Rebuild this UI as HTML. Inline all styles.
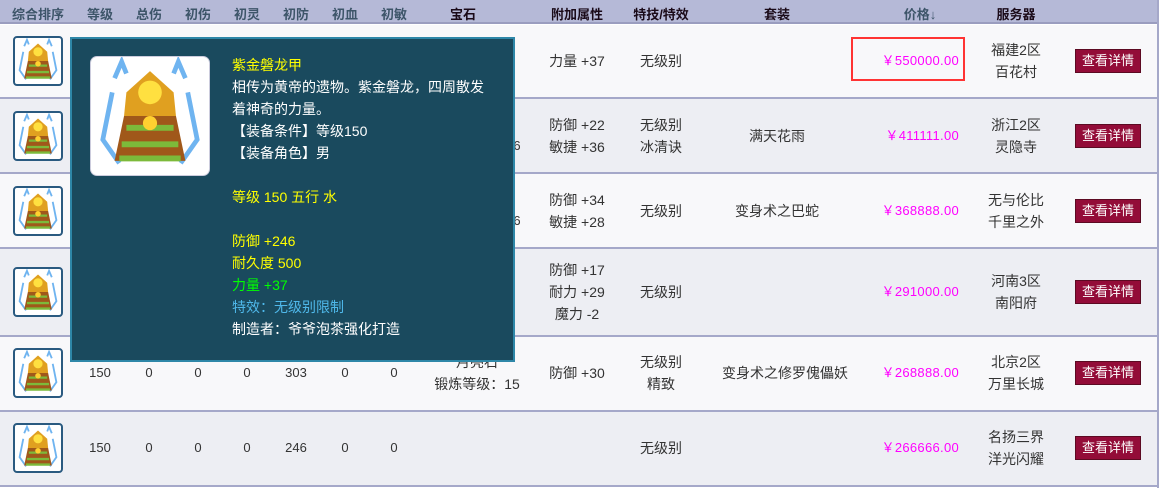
<!DOCTYPE html>
<html><head><meta charset="utf-8"><style>
*{margin:0;padding:0;box-sizing:border-box}
body{width:1159px;height:488px;overflow:hidden;background:#fff;font-family:"Liberation Sans","Noto Sans CJK SC","WenQuanYi Zen Hei",sans-serif;font-size:14px;color:#333;position:relative}
.hdr{position:absolute;left:0;top:0;width:1157px;height:24px;background:#b5b9d7;border-bottom:2px solid #9a9dbf}
.h{position:absolute;top:4px;width:100px;text-align:center;font-weight:bold;font-size:13px;color:#3d5569}
.h.k{color:#1a0a18}
.row{position:absolute;left:0;width:1157px;border-bottom:2px solid #a5a8c9}
.c{position:absolute;width:140px;text-align:center;line-height:22px;transform:translateY(-50%)}
.n{font-size:13px}
.p{position:absolute;right:200px;color:#f0f;line-height:22px;transform:translateY(-50%);letter-spacing:.3px;font-size:13px}
.btn{position:absolute;left:1075px;width:66px;height:24px;background:#930c38;border:1px solid #5c0a22;color:#fff;text-align:center;line-height:22px;font-size:13px;transform:translateY(-50%)}
.ic{position:absolute;left:13px;width:50px;height:50px;border:2px solid #2a5a80;border-radius:4px;background:#fff;transform:translateY(-50%);overflow:hidden}
.rb{position:absolute;left:1157px;top:0;width:2px;height:488px;background:#a5a8c9}
.tip{position:absolute;left:70px;top:37px;width:445px;height:325px;background:#1a4a5e;border:2px solid #2e87a8}
.img{position:absolute;left:18px;top:17px;width:120px;height:120px;background:#fff;border-radius:7px;border:1px solid #ccd}
.tt{position:absolute;left:160px;top:15px;line-height:22px;color:#fff;font-size:14px}
.y{color:#ff0}.g{color:#0f0}.b{color:#4fb8ea}
</style></head><body>
<svg width="0" height="0" style="position:absolute"><defs>
<g id="arm">
<path d="M20 18 L26 4 L30 14 M80 18 L74 4 L70 14 M18 30 L10 70 L24 90 M82 30 L90 70 L76 90" stroke="#6fb4f0" stroke-width="4" fill="none"/>
<path d="M30 30 L50 12 L70 30 L72 50 L28 50 Z" fill="#e0a020"/>
<circle cx="50" cy="30" r="10" fill="#ffe040"/>
<path d="M28 50 L72 50 L80 88 L20 88 Z" fill="#a0581a"/>
<path d="M30 60 L70 60 M26 74 L74 74 M24 86 L76 86" stroke="#7cba3a" stroke-width="5"/>
<circle cx="50" cy="56" r="6" fill="#ffd030"/>
</g></defs></svg>
<div class="hdr">
<div class="h" style="left:-12px">综合排序</div>
<div class="h" style="left:50px">等级</div>
<div class="h" style="left:99px">总伤</div>
<div class="h" style="left:148px">初伤</div>
<div class="h" style="left:197px">初灵</div>
<div class="h" style="left:246px">初防</div>
<div class="h" style="left:295px">初血</div>
<div class="h" style="left:344px">初敏</div>
<div class="h k" style="left:413px">宝石</div>
<div class="h k" style="left:527px">附加属性</div>
<div class="h k" style="left:611px">特技/特效</div>
<div class="h k" style="left:727px">套装</div>
<div class="h" style="left:870px">价格↓</div>
<div class="h k" style="left:966px">服务器</div>
</div>
<div class="rb"></div>

<div class="row" style="top:25px;height:74px;background:#f8f8fa"></div>
<div class="row" style="top:99px;height:75px;background:#edeef3"></div>
<div class="row" style="top:174px;height:75px;background:#f8f8fa"></div>
<div class="row" style="top:249px;height:88px;background:#edeef3"></div>
<div class="row" style="top:337px;height:75px;background:#f8f8fa"></div>
<div class="row" style="top:412px;height:75px;background:#edeef3"></div>

<div class="ic" style="top:61px"><svg width="46" height="46" viewBox="0 0 100 100"><use href="#arm"/></svg></div>
<div class="ic" style="top:136px"><svg width="46" height="46" viewBox="0 0 100 100"><use href="#arm"/></svg></div>
<div class="ic" style="top:211px"><svg width="46" height="46" viewBox="0 0 100 100"><use href="#arm"/></svg></div>
<div class="ic" style="top:292px"><svg width="46" height="46" viewBox="0 0 100 100"><use href="#arm"/></svg></div>
<div class="ic" style="top:373px"><svg width="46" height="46" viewBox="0 0 100 100"><use href="#arm"/></svg></div>
<div class="ic" style="top:448px"><svg width="46" height="46" viewBox="0 0 100 100"><use href="#arm"/></svg></div>

<div class="c" style="left:507px;top:61px">力量 +37</div>
<div class="c" style="left:591px;top:61px">无级别</div>
<div style="position:absolute;left:851px;top:37px;width:114px;height:44px;border:2px solid #f33"></div>
<div class="p" style="top:61px">￥550000.00</div>
<div class="c" style="left:946px;top:61px">福建2区<br>百花村</div>
<div class="btn" style="top:61px">查看详情</div>

<div class="c n" style="left:447px;top:146px">6</div>
<div class="c" style="left:507px;top:136px">防御 +22<br>敏捷 +36</div>
<div class="c" style="left:591px;top:136px">无级别<br>冰清诀</div>
<div class="c" style="left:707px;top:136px">满天花雨</div>
<div class="p" style="top:136px">￥411111.00</div>
<div class="c" style="left:946px;top:136px">浙江2区<br>灵隐寺</div>
<div class="btn" style="top:136px">查看详情</div>

<div class="c n" style="left:447px;top:221px">6</div>
<div class="c" style="left:507px;top:211px">防御 +34<br>敏捷 +28</div>
<div class="c" style="left:591px;top:211px">无级别</div>
<div class="c" style="left:707px;top:211px">变身术之巴蛇</div>
<div class="p" style="top:211px">￥368888.00</div>
<div class="c" style="left:946px;top:211px">无与伦比<br>千里之外</div>
<div class="btn" style="top:211px">查看详情</div>

<div class="c" style="left:507px;top:292px">防御 +17<br>耐力 +29<br>魔力 -2</div>
<div class="c" style="left:591px;top:292px">无级别</div>
<div class="p" style="top:292px">￥291000.00</div>
<div class="c" style="left:946px;top:292px">河南3区<br>南阳府</div>
<div class="btn" style="top:292px">查看详情</div>

<div class="c n" style="left:30px;top:373px">150</div>
<div class="c n" style="left:79px;top:373px">0</div>
<div class="c n" style="left:128px;top:373px">0</div>
<div class="c n" style="left:177px;top:373px">0</div>
<div class="c n" style="left:226px;top:373px">303</div>
<div class="c n" style="left:275px;top:373px">0</div>
<div class="c n" style="left:324px;top:373px">0</div>
<div class="c" style="left:407px;top:373px">月亮石<br>锻炼等级：15</div>
<div class="c" style="left:507px;top:373px">防御 +30</div>
<div class="c" style="left:591px;top:373px">无级别<br>精致</div>
<div class="c" style="left:715px;top:373px">变身术之修罗傀儡妖</div>
<div class="p" style="top:373px">￥268888.00</div>
<div class="c" style="left:946px;top:373px">北京2区<br>万里长城</div>
<div class="btn" style="top:373px">查看详情</div>

<div class="c n" style="left:30px;top:448px">150</div>
<div class="c n" style="left:79px;top:448px">0</div>
<div class="c n" style="left:128px;top:448px">0</div>
<div class="c n" style="left:177px;top:448px">0</div>
<div class="c n" style="left:226px;top:448px">246</div>
<div class="c n" style="left:275px;top:448px">0</div>
<div class="c n" style="left:324px;top:448px">0</div>
<div class="c" style="left:591px;top:448px">无级别</div>
<div class="p" style="top:448px">￥266666.00</div>
<div class="c" style="left:946px;top:448px">名扬三界<br>洋光闪耀</div>
<div class="btn" style="top:448px">查看详情</div>

<div class="tip">
<div class="img"><svg width="118" height="118" viewBox="0 0 100 100"><use href="#arm"/></svg></div>
<div class="tt">
<div class="y">紫金磐龙甲</div>
<div>相传为黄帝的遗物。紫金磐龙，四周散发</div>
<div>着神奇的力量。</div>
<div>【装备条件】等级150</div>
<div>【装备角色】男</div>
<div>&nbsp;</div>
<div class="y">等级 150 五行 水</div>
<div>&nbsp;</div>
<div class="y">防御 +246</div>
<div class="y">耐久度 500</div>
<div class="g">力量 +37</div>
<div class="b">特效：无级别限制</div>
<div>制造者：爷爷泡茶强化打造</div>
</div>
</div>
</body></html>
